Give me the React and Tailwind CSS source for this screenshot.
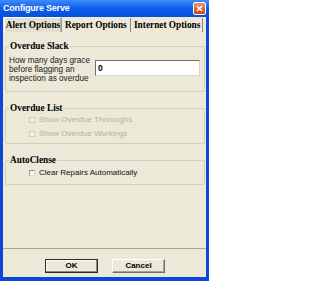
function GroupBox({ title, className = "", children }) {
  return (
    <div className={`relative border border-[#D0D0BF] rounded-[2px] ${className}`}>
      <span className="absolute -top-[7px] left-[3px] bg-[#ECE9D8] px-[1px] font-['Liberation_Serif',serif] font-bold text-[9.3px] leading-[12px] text-black whitespace-nowrap">
        {title}
      </span>
      {children}
    </div>
  );
}

function CheckRow({ label, disabled }) {
  return (
    <div className="flex items-center gap-[4px] pl-[23px] h-[14px]">
      <span
        className={`w-[6px] h-[6px] border ${
          disabled
            ? "border-[#CFCCBE] bg-[#F3F2EC]"
            : "border-[#9A988C] border-r-[#DDDBD0] border-b-[#DDDBD0] bg-white"
        }`}
      />
      <span
        className={`text-[8px] leading-[10px] whitespace-nowrap font-['Liberation_Sans',sans-serif] ${
          disabled ? "text-[#B4B1A3]" : "text-[#111]"
        }`}
      >
        {label}
      </span>
    </div>
  );
}

export default function App() {
  return (
    <div className="w-[209px] h-[281px] bg-[#0C47D8] flex flex-col overflow-hidden">
      {/* Title bar */}
      <div className="h-[17px] flex items-center justify-between pl-[3px] pr-[3px] bg-gradient-to-b from-[#3D8BFA] via-[#0A5DEB] to-[#0650DA]">
        <span className="text-white font-bold text-[9px] leading-[11px] tracking-[-0.2px] font-['Liberation_Sans',sans-serif] whitespace-nowrap">
          Configure Serve
        </span>
        <span className="w-[13px] h-[13px] rounded-[2px] border border-white bg-gradient-to-b from-[#E9926F] to-[#C6431D] flex items-center justify-center">
          <svg width="7" height="7" viewBox="0 0 7 7">
            <path d="M1 1 L6 6 M6 1 L1 6" stroke="white" strokeWidth="1.5" />
          </svg>
        </span>
      </div>

      {/* Body */}
      <div className="flex-1 mx-[3px] mb-[4px] bg-[#ECE9D8] flex flex-col">
        {/* Tabs */}
        <div className="flex items-end h-[15px] pl-[1px] font-['Liberation_Serif',serif] font-bold text-[9.3px] leading-[11px] text-black whitespace-nowrap">
          <div className="w-[58px] h-[15px] flex items-center justify-center bg-[#E4E0CF] border border-b-0 border-[#9C9A8E] border-t-[#fff] border-l-[#fff] shadow-[inset_-1px_0_0_#B8B5A7]">
            Alert Options
          </div>
          <div className="w-[69px] h-[14px] pl-[3px] flex items-center border-r border-[#8C8A7E]">
            Report Options
          </div>
          <div className="w-[72px] h-[14px] pl-[3px] flex items-center border-r border-[#8C8A7E]">
            Internet Options
          </div>
        </div>

        {/* Panel */}
        <div className="h-[217px] border-b border-[#A9A79A] pt-[14px] pl-[2px] pr-[1px] flex flex-col gap-[16px]">
          <GroupBox title="Overdue Slack" className="h-[46px]">
            <div className="flex pt-[9px] pl-[3px] pr-[4px]">
              <p className="w-[86px] text-[8.2px] leading-[9px] text-[#1a1a1a] font-['Liberation_Sans',sans-serif]">
                How many days grace before flagging an inspection as overdue
              </p>
              <div className="flex-1 h-[16px] mt-[4px] bg-white border border-[#D8D6CA] border-t-[#6F6D63] border-l-[#6F6D63] flex items-center pl-[2px] text-[8.5px] font-bold font-['Liberation_Sans',sans-serif]">
                0
              </div>
            </div>
          </GroupBox>

          <GroupBox title="Overdue List" className="h-[36px]">
            <div className="pt-[4px]">
              <CheckRow label="Show Overdue Thoroughs" disabled />
              <CheckRow label="Show Overdue Workings" disabled />
            </div>
          </GroupBox>

          <GroupBox title="AutoClense" className="h-[25px]">
            <div className="pt-[5px]">
              <CheckRow label="Clear Repairs Automatically" />
            </div>
          </GroupBox>
        </div>

        {/* Buttons */}
        <div className="flex justify-center gap-[14px] pt-[10px] pl-[1px]">
          <button className="w-[53px] h-[14px] bg-[#ECE9D8] border border-[#2E2E2E] shadow-[inset_-1px_-1px_0_#8C8A7E,inset_1px_1px_0_#fff] font-['Liberation_Sans',sans-serif] font-bold text-[8px] leading-[10px] text-black">
            OK
          </button>
          <button className="w-[53px] h-[14px] bg-[#ECE9D8] border border-[#707070] border-t-white border-l-white shadow-[inset_-1px_-1px_0_#A7A598] font-['Liberation_Sans',sans-serif] font-bold text-[8px] leading-[10px] text-black">
            Cancel
          </button>
        </div>
      </div>
    </div>
  );
}
